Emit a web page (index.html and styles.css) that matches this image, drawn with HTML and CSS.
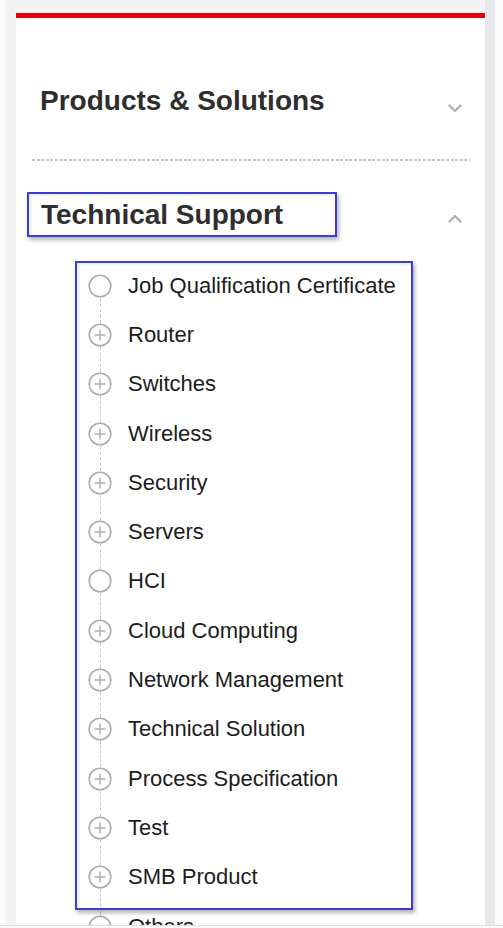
FILE: index.html
```html
<!DOCTYPE html>
<html lang="en">
<head>
<meta charset="utf-8">
<title>Menu</title>
<link rel="stylesheet" href="styles.css">
</head>
<body>
<div class="frame">
  <div class="card">
    <section class="sec sec-first">
      <div class="sec-head">
        <h2 class="title">Products &amp; Solutions</h2>
        <svg class="chev chev-down" width="14" height="9" viewBox="0 0 14 9"><polyline points="1.5,1.5 7,7 12.5,1.5" fill="none" stroke="#b3b3b3" stroke-width="2.4" stroke-linecap="round" stroke-linejoin="round"/></svg>
      </div>
      <div class="dots"></div>
    </section>
    <section class="sec">
      <div class="sec-head">
        <h2 class="title title-marked">Technical Support</h2>
        <svg class="chev chev-up" width="14" height="9" viewBox="0 0 14 9"><polyline points="1.5,7.5 7,2 12.5,7.5" fill="none" stroke="#b3b3b3" stroke-width="2.4" stroke-linecap="round" stroke-linejoin="round"/></svg>
      </div>
      <ul class="tree">
        <li class="node"><svg class="ico" width="24" height="24" viewBox="0 0 24 24"><circle cx="12" cy="12" r="10.8" fill="none" stroke="#adadad" stroke-width="1.6"/></svg><span class="label">Job Qualification Certificate</span></li>
        <li class="node"><svg class="ico" width="24" height="24" viewBox="0 0 24 24"><circle cx="12" cy="12" r="10.8" fill="none" stroke="#adadad" stroke-width="1.6"/><path d="M6.6 12h10.8M12 6.6v10.8" stroke="#adadad" stroke-width="1.4"/></svg><span class="label">Router</span></li>
        <li class="node"><svg class="ico" width="24" height="24" viewBox="0 0 24 24"><circle cx="12" cy="12" r="10.8" fill="none" stroke="#adadad" stroke-width="1.6"/><path d="M6.6 12h10.8M12 6.6v10.8" stroke="#adadad" stroke-width="1.4"/></svg><span class="label">Switches</span></li>
        <li class="node"><svg class="ico" width="24" height="24" viewBox="0 0 24 24"><circle cx="12" cy="12" r="10.8" fill="none" stroke="#adadad" stroke-width="1.6"/><path d="M6.6 12h10.8M12 6.6v10.8" stroke="#adadad" stroke-width="1.4"/></svg><span class="label">Wireless</span></li>
        <li class="node"><svg class="ico" width="24" height="24" viewBox="0 0 24 24"><circle cx="12" cy="12" r="10.8" fill="none" stroke="#adadad" stroke-width="1.6"/><path d="M6.6 12h10.8M12 6.6v10.8" stroke="#adadad" stroke-width="1.4"/></svg><span class="label">Security</span></li>
        <li class="node"><svg class="ico" width="24" height="24" viewBox="0 0 24 24"><circle cx="12" cy="12" r="10.8" fill="none" stroke="#adadad" stroke-width="1.6"/><path d="M6.6 12h10.8M12 6.6v10.8" stroke="#adadad" stroke-width="1.4"/></svg><span class="label">Servers</span></li>
        <li class="node"><svg class="ico" width="24" height="24" viewBox="0 0 24 24"><circle cx="12" cy="12" r="10.8" fill="none" stroke="#adadad" stroke-width="1.6"/></svg><span class="label">HCI</span></li>
        <li class="node"><svg class="ico" width="24" height="24" viewBox="0 0 24 24"><circle cx="12" cy="12" r="10.8" fill="none" stroke="#adadad" stroke-width="1.6"/><path d="M6.6 12h10.8M12 6.6v10.8" stroke="#adadad" stroke-width="1.4"/></svg><span class="label">Cloud Computing</span></li>
        <li class="node"><svg class="ico" width="24" height="24" viewBox="0 0 24 24"><circle cx="12" cy="12" r="10.8" fill="none" stroke="#adadad" stroke-width="1.6"/><path d="M6.6 12h10.8M12 6.6v10.8" stroke="#adadad" stroke-width="1.4"/></svg><span class="label">Network Management</span></li>
        <li class="node"><svg class="ico" width="24" height="24" viewBox="0 0 24 24"><circle cx="12" cy="12" r="10.8" fill="none" stroke="#adadad" stroke-width="1.6"/><path d="M6.6 12h10.8M12 6.6v10.8" stroke="#adadad" stroke-width="1.4"/></svg><span class="label">Technical Solution</span></li>
        <li class="node"><svg class="ico" width="24" height="24" viewBox="0 0 24 24"><circle cx="12" cy="12" r="10.8" fill="none" stroke="#adadad" stroke-width="1.6"/><path d="M6.6 12h10.8M12 6.6v10.8" stroke="#adadad" stroke-width="1.4"/></svg><span class="label">Process Specification</span></li>
        <li class="node"><svg class="ico" width="24" height="24" viewBox="0 0 24 24"><circle cx="12" cy="12" r="10.8" fill="none" stroke="#adadad" stroke-width="1.6"/><path d="M6.6 12h10.8M12 6.6v10.8" stroke="#adadad" stroke-width="1.4"/></svg><span class="label">Test</span></li>
        <li class="node"><svg class="ico" width="24" height="24" viewBox="0 0 24 24"><circle cx="12" cy="12" r="10.8" fill="none" stroke="#adadad" stroke-width="1.6"/><path d="M6.6 12h10.8M12 6.6v10.8" stroke="#adadad" stroke-width="1.4"/></svg><span class="label">SMB Product</span></li>
        <li class="node"><svg class="ico" width="24" height="24" viewBox="0 0 24 24"><circle cx="12" cy="12" r="10.8" fill="none" stroke="#adadad" stroke-width="1.6"/></svg><span class="label">Others</span></li>
      </ul>
    </section>
  </div>
  <div class="rail"></div>
</div>
<div class="bottom-bar"></div>
</body>
</html>
```

FILE: styles.css
```css
html, body {
  margin: 0;
  padding: 0;
  height: 928px;
  overflow: hidden;
  background: #fbfbfb;
  font-family: "Liberation Sans", Arial, sans-serif;
}

.frame {
  margin-left: 5px;
  width: 490px;
  height: 928px;
  background: #f2f3f5;
  border-radius: 0 0 0 10px;
  display: flex;
  align-items: flex-start;
  padding-top: 13px;
  box-sizing: border-box;
}

.card {
  margin-left: 11px;
  width: 469px;
  background: #ffffff;
  border-top: 5px solid #e2000f;
  min-height: 1000px;
}

.rail {
  width: 10px;
  align-self: stretch;
  margin-top: -13px;
  background: #e7e8ea;
}

.sec {
  padding: 0 15px 0 16px;
}

.sec-first {
  padding-top: 67px;
}

.sec-head {
  display: flex;
  justify-content: space-between;
  align-items: flex-start;
}

.title {
  margin: 0;
  font-size: 28px;
  line-height: 32px;
  font-weight: bold;
  color: #2e2e2e;
  padding-left: 8px;
}

.title-marked {
  margin-top: 31px;
  margin-left: -5px;
  width: 310px;
  box-sizing: border-box;
  padding: 5px 0 4px 12px;
  border: 2px solid #3b3bd9;
  box-shadow: 2px 3px 4px rgba(0, 0, 0, 0.3), inset 2px 2px 3px rgba(0, 0, 0, 0.08);
}

.chev {
  display: block;
  margin-right: 8px;
}

.chev-down {
  margin-top: 19px;
}

.chev-up {
  margin-top: 53px;
}

.dots {
  margin-top: 42px;
  height: 2px;
  background: repeating-linear-gradient(90deg, #c6c6c6 0 3px, transparent 3px 4.6px);
}

.tree {
  position: relative;
  list-style: none;
  margin: 24px 0 0 43px;
  padding: 0;
  width: 338px;
}

.tree::after {
  content: "";
  position: absolute;
  left: 0;
  top: 0;
  width: 338px;
  height: 649px;
  box-sizing: border-box;
  border: 2px solid #3b3bd9;
  box-shadow: 2px 3px 4px rgba(0, 0, 0, 0.3), inset 2px 2px 3px rgba(0, 0, 0, 0.08);
  pointer-events: none;
}

.node {
  position: relative;
  height: 49.3px;
  display: flex;
  align-items: center;
  padding-left: 13px;
}

.node:not(:last-child)::before {
  content: "";
  position: absolute;
  left: 24.5px;
  top: calc(50% + 12px);
  height: 25.3px;
  border-left: 1px dashed #c9c9c9;
}

.ico {
  display: block;
  flex: none;
}

.label {
  margin-left: 16px;
  font-size: 22px;
  color: #1c1c1c;
  white-space: nowrap;
}

.bottom-bar {
  position: fixed;
  left: 0;
  right: 0;
  bottom: 0;
  height: 2px;
  border-top: 1px solid #dedede;
  background: #fafafa;
}
```
